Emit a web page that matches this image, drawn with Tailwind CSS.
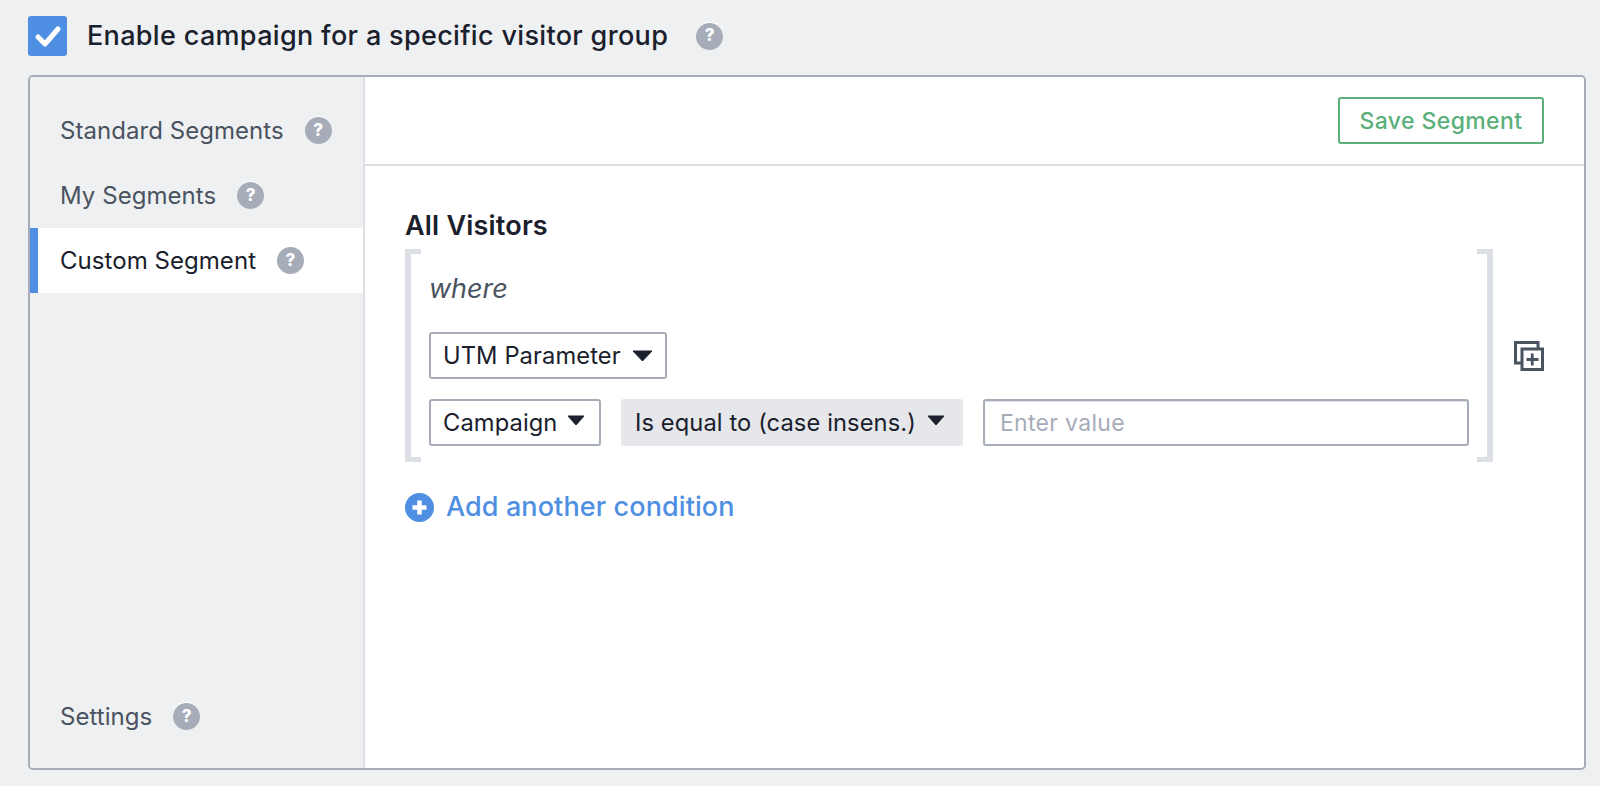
<!DOCTYPE html>
<html lang="en">
<head>
    <meta charset="UTF-8">
    <meta name="viewport" content="width=device-width, initial-scale=1.0">
    <title>Visitor Group</title>
    <script src="https://cdn.jsdelivr.net/npm/@tailwindcss/browser@4"></script>
</head>
<body class="bg-[#eef0f2] font-['Inter',sans-serif] text-[#1a202c] overflow-hidden">
<div class="w-[1600px] h-[786px] pl-[28px] pr-[14px] pt-[16px]">
    <!-- Checkbox row -->
    <div class="flex items-center h-[40px]">
        <span class="w-[39px] h-[40px] rounded-[3px] bg-[#4f8fe3] flex items-center justify-center">
            <svg width="28" height="24" viewBox="0 0 28 24" fill="none"><path d="M4 13l7 7L24 5" stroke="#fff" stroke-width="5" stroke-linecap="round" stroke-linejoin="round"/></svg>
        </span>
        <span class="ml-[20px] text-[27px] font-medium tracking-[0.33px]">Enable campaign for a specific visitor group</span>
        <span class="ml-[28px] w-[27px] h-[27px] rounded-full bg-[#a6acb8] text-white text-[17px] font-extrabold flex items-center justify-center shadow-[0_-1px_0_#fff]">?</span>
    </div>

    <!-- Panel -->
    <div class="mt-[19px] h-[695px] flex border-2 border-[#a6adb9] rounded-[5px] bg-white overflow-hidden">
        <!-- Sidebar -->
        <aside class="w-[335px] shrink-0 bg-[#eef0f2] border-r-2 border-[#dcdfe4] flex flex-col pt-[21px] pb-[19px] text-[24px] text-[#4a5360] tracking-[0.05px]">
            <div class="h-[65px] pl-[30px] flex items-center">
                Standard Segments
                <span class="ml-[21px] w-[27px] h-[27px] rounded-full bg-[#a6acb8] text-white text-[17px] font-extrabold flex items-center justify-center shadow-[0_-1px_0_#fff]">?</span>
            </div>
            <div class="h-[65px] pl-[30px] flex items-center">
                My Segments
                <span class="ml-[21px] w-[27px] h-[27px] rounded-full bg-[#a6acb8] text-white text-[17px] font-extrabold flex items-center justify-center shadow-[0_-1px_0_#fff]">?</span>
            </div>
            <div class="h-[65px] pl-[22px] flex items-center bg-white border-l-[8px] border-[#4f8fe3] text-[#1a202c]">
                Custom Segment
                <span class="ml-[21px] w-[27px] h-[27px] rounded-full bg-[#a6acb8] text-white text-[17px] font-extrabold flex items-center justify-center">?</span>
            </div>
            <div class="mt-auto h-[65px] pl-[30px] flex items-center">
                Settings
                <span class="ml-[21px] w-[27px] h-[27px] rounded-full bg-[#a6acb8] text-white text-[17px] font-extrabold flex items-center justify-center shadow-[0_-1px_0_#fff]">?</span>
            </div>
        </aside>

        <!-- Main -->
        <main class="flex-1 flex flex-col">
            <header class="h-[89px] shrink-0 border-b-2 border-[#dcdfe4] flex items-start justify-end pt-[20px] pr-[40px]">
                <button class="w-[206px] h-[47px] pt-[1px] rounded-[3px] border-2 border-[#5bb07a] text-[#5bb07a] text-[23px] font-medium tracking-[0.4px]">Save Segment</button>
            </header>
            <section class="pl-[40px] pt-[42px]">
                <h2 class="text-[27px] leading-[36px] font-semibold tracking-[0.2px]">All Visitors</h2>
                <div class="flex items-center mt-[5px]">
                    <div class="w-[1088px] h-[213px] flex">
                        <div class="w-[16px] border-l-[6px] border-y-[5px] border-[#dcdfe4]"></div>
                        <div class="flex-1 px-[8px] pt-[22px]">
                            <p class="italic text-[27px] leading-[36px] text-[#4a5360]">where</p>
                            <div class="mt-[25px]">
                                <div class="inline-flex items-center h-[47px] px-[12px] border-2 border-[#a6adb9] rounded-[3px] text-[23.700px] tracking-[0.1px]">
                                    UTM Parameter
                                    <svg class="ml-[11px]" width="21" height="12" viewBox="0 0 21 12"><path d="M1 1h19l-9.500 10z" fill="#1a202c" stroke="#1a202c" stroke-linejoin="round"/></svg>
                                </div>
                            </div>
                            <div class="mt-[20px] flex">
                                <div class="flex items-center h-[47px] w-[172px] px-[12px] border-2 border-[#a6adb9] rounded-[3px] text-[23.700px] tracking-[0.1px]">
                                    Campaign
                                    <svg class="ml-[10px] -mt-[4px]" width="18" height="11" viewBox="0 0 18 11"><path d="M1 1h16l-8 9z" fill="#1a202c" stroke="#1a202c" stroke-linejoin="round"/></svg>
                                </div>
                                <div class="ml-[20px] flex items-center h-[47px] w-[342px] px-[14px] bg-[#e5e7eb] rounded-[3px] text-[23.700px] tracking-[0.1px] whitespace-nowrap">
                                    Is equal to (case insens.)
                                    <svg class="ml-[11px] -mt-[4px]" width="18" height="11" viewBox="0 0 18 11"><path d="M1 1h16l-8 9z" fill="#1a202c" stroke="#1a202c" stroke-linejoin="round"/></svg>
                                </div>
                                <input class="ml-[20px] flex-1 min-w-0 h-[47px] px-[15px] border-2 border-[#a6adb9] rounded-[3px] text-[23px] tracking-[0.3px] placeholder:text-[#a6adb9] shadow-[inset_0_1px_1px_#dcdfe4]" placeholder="Enter value">
                            </div>
                        </div>
                        <div class="w-[16px] border-r-[6px] border-y-[5px] border-[#dcdfe4]"></div>
                    </div>
                    <svg class="ml-[21px]" width="30" height="30" viewBox="0 0 30 30" fill="none" stroke="#4a5360" stroke-width="3">
                        <path d="M24 8V1.500H1.500V22H8"/>
                        <rect x="8" y="8" width="20.500" height="20.500" fill="#fff"/>
                        <path d="M18.250 12.500v12M12.500 18.500h12" stroke-width="2.800"/>
                    </svg>
                </div>
                <div class="flex items-center mt-[25px] text-[#4f8fe3]">
                    <svg width="29" height="29" viewBox="0 0 29 29"><circle cx="14.500" cy="14.500" r="14.500" fill="#4f8fe3"/><path d="M14.500 7.500v14M7.500 14.500h14" stroke="#fff" stroke-width="4.500"/></svg>
                    <span class="ml-[12px] text-[27px] font-medium tracking-[0.1px]">Add another condition</span>
                </div>
            </section>
        </main>
    </div>
</div>
</body>
</html>
